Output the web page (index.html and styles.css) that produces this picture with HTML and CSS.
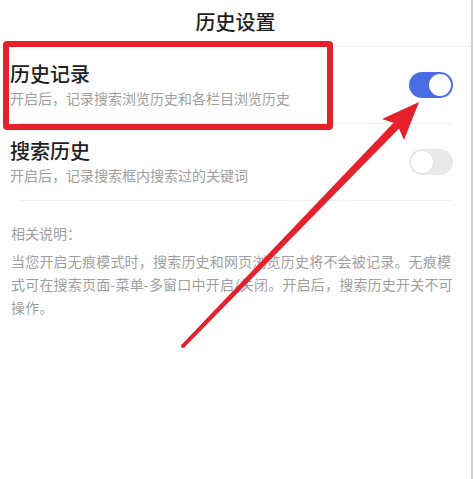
FILE: index.html
```html
<!DOCTYPE html>
<html lang="zh-CN">
<head>
    <meta charset="UTF-8">
    <meta name="viewport" content="width=device-width, initial-scale=1.0">
    <title>历史设置</title>
    <link rel="stylesheet" href="styles.css">
</head>
<body>
    <div class="page">
        <div class="header">历史设置</div>

        <div class="setting-row">
            <div class="setting-text">
                <div class="setting-title">历史记录</div>
                <div class="setting-desc">开启后，记录搜索浏览历史和各栏目浏览历史</div>
            </div>
            <div class="toggle on"><span class="knob"></span></div>
        </div>
        <div class="divider"></div>

        <div class="setting-row">
            <div class="setting-text">
                <div class="setting-title">搜索历史</div>
                <div class="setting-desc">开启后，记录搜索框内搜索过的关键词</div>
            </div>
            <div class="toggle"><span class="knob"></span></div>
        </div>
        <div class="divider"></div>

        <div class="notes">
            <div class="notes-title">相关说明：</div>
            <p class="notes-text">当您开启无痕模式时，搜索历史和网页浏览历史将不会被记录。无痕模式可在搜索页面-菜单-多窗口中开启/关闭。开启后，搜索历史开关不可操作。</p>
        </div>

        <!-- annotation overlay -->
        <div class="mark-box"></div>
        <svg class="mark-arrow" width="475" height="479" viewBox="0 0 475 479">
            <polygon points="181.6,344.7 395.7,120.4 401.5,126 184.4,347.3" fill="#e5212b"/>
            <circle cx="183" cy="346" r="2" fill="#e5212b"/>
            <polygon points="419,102 382,119 397,124 404,140" fill="#e5212b"/>
        </svg>
    </div>
</body>
</html>
```

FILE: styles.css
```css
body {
    margin: 0;
    background-color: #fff;
    font-family: "Noto Sans CJK SC", "Noto Sans", sans-serif;
}

.page {
    position: relative;
    width: 473px;
    height: 479px;
    box-sizing: border-box;
    border-right: 2px solid #cfcfcf;
    overflow: hidden;
}

.header {
    height: 47px;
    border-bottom: 1px solid #f3f3f3;
    display: flex;
    justify-content: center;
    align-items: center;
    padding-bottom: 3px;
    box-sizing: border-box;
    font-size: 20px;
    font-weight: 500;
    color: #1e1e1e;
}

.setting-row {
    height: 76px;
    display: flex;
    justify-content: space-between;
    align-items: center;
    padding: 0 18px 0 10px;
}

.setting-title {
    font-size: 20px;
    line-height: 24px;
    font-weight: 500;
    color: #1e1e1e;
}

.setting-desc {
    margin-top: 2px;
    font-size: 14px;
    line-height: 20px;
    color: #9e9e9e;
}

.divider {
    height: 1px;
    margin: 0 18px 0 20px;
    background-color: #f1f1f1;
}

.toggle {
    width: 44px;
    height: 26px;
    border-radius: 13px;
    background-color: #e9e9e9;
    display: flex;
    align-items: center;
    padding: 0 2px;
    box-sizing: border-box;
}

.knob {
    width: 22px;
    height: 22px;
    border-radius: 50%;
    background-color: #fff;
    box-shadow: 0 0 0 1px #e2e2e2;
}

.toggle.on {
    background-color: #4a6de3;
    justify-content: flex-end;
}

.toggle.on .knob {
    box-shadow: none;
}

.notes {
    padding: 21px 16px 0 11px;
    color: #9e9e9e;
}

.notes-title {
    font-size: 14px;
    line-height: 22px;
}

.notes-text {
    margin: 6px 0 0;
    font-size: 14px;
    line-height: 23px;
    letter-spacing: 0.2px;
}

.mark-box {
    position: absolute;
    left: 3px;
    top: 41px;
    width: 330px;
    height: 89px;
    box-sizing: border-box;
    border: 6px solid #e5212b;
    border-radius: 4px;
}

.mark-arrow {
    position: absolute;
    left: 0;
    top: 0;
    pointer-events: none;
}
```
